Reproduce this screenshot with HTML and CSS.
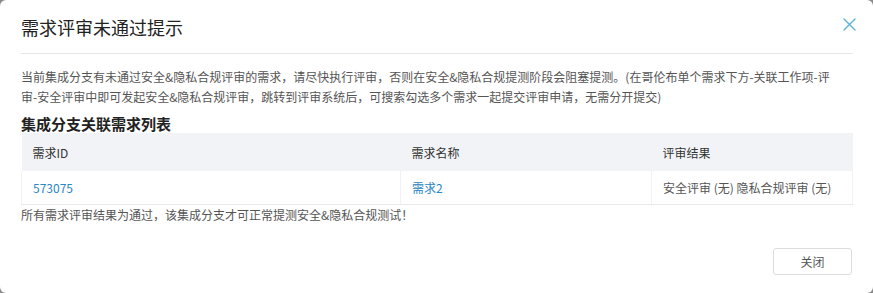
FILE: index.html
```html
<!DOCTYPE html>
<html lang="zh-CN">
<head>
<meta charset="utf-8">
<title>需求评审未通过提示</title>
<link rel="stylesheet" href="styles.css">
</head>
<body>
<div class="modal">
  <div class="modal-header">
    <div class="modal-title">需求评审未通过提示</div>
    <span class="close" aria-label="关闭">
      <svg width="13" height="13" viewBox="0 0 13 13"><path d="M1 1 L12 12 M12 1 L1 12" stroke="#5eb1dc" stroke-width="1.4" fill="none" stroke-linecap="round"/></svg>
    </span>
  </div>
  <div class="modal-body">
    <p class="desc">当前集成分支有未通过安全&amp;隐私合规评审的需求，请尽快执行评审，否则在安全&amp;隐私合规提测阶段会阻塞提测。(在哥伦布单个需求下方-关联工作项-评审-安全评审中即可发起安全&amp;隐私合规评审，跳转到评审系统后，可搜索勾选多个需求一起提交评审申请，无需分开提交)</p>
    <div class="section-title">集成分支关联需求列表</div>
    <table class="req-table">
      <colgroup>
        <col class="c1"><col class="c2"><col class="c3">
      </colgroup>
      <thead>
        <tr><th>需求ID</th><th>需求名称</th><th>评审结果</th></tr>
      </thead>
      <tbody>
        <tr><td><a class="link">573075</a></td><td><a class="link">需求2</a></td><td class="result">安全评审 (无) 隐私合规评审 (无)</td></tr>
      </tbody>
    </table>
    <p class="note">所有需求评审结果为通过，该集成分支才可正常提测安全&amp;隐私合规测试！</p>
    <div class="modal-footer">
      <button class="btn">关闭</button>
    </div>
  </div>
</div>
</body>
</html>
```
FILE: styles.css
```css
html, body {
  margin: 0;
  padding: 0;
}
body {
  background: #8a8a8a;
  font-family: "Microsoft YaHei", "Noto Sans CJK SC", "Liberation Sans", sans-serif;
  color: #333;
}
.modal {
  width: 873px;
  height: 293px;
  background: #fff;
  border-radius: 6px;
  overflow: hidden;
  box-sizing: border-box;
}
.modal-header {
  margin: 0 20px 0 21px;
  height: 53px;
  border-bottom: 1px solid #e6e6e6;
  display: flex;
  align-items: center;
  justify-content: space-between;
}
.modal-title {
  font-size: 18px;
  line-height: 24px;
  color: #222;
  margin-top: 1px;
}
.close {
  display: flex;
  margin-right: -3px;
  margin-top: -5px;
}
.modal-body {
  padding: 0 21px 0 21px;
}
.desc {
  margin: 13px 0 0;
  width: 815px;
  font-size: 12px;
  line-height: 20px;
  color: #555;
}
.section-title {
  margin-top: 8px;
  font-size: 15px;
  line-height: 18px;
  font-weight: bold;
  color: #222;
}
.req-table {
  width: 831px;
  border-collapse: collapse;
  table-layout: fixed;
  font-size: 12px;
}
.c1 { width: 379px; }
.c2 { width: 251px; }
.c3 { width: 201px; }
.req-table th {
  height: 38px;
  padding: 0 11px;
  text-align: left;
  font-weight: normal;
  color: #333;
  background: #f1f3f7;
}
.req-table td {
  height: 33px;
  padding: 0 11px;
  border-left: 1px solid #f2f2f2;
  border-right: 1px solid #f2f2f2;
  border-bottom: 1px solid #e9e9e9;
}
.link {
  color: #2a86c5;
  text-decoration: none;
}
.result {
  color: #555;
}
.note {
  margin: 1px 0 0;
  font-size: 12px;
  line-height: 18px;
  color: #555;
}
.modal-footer {
  margin-top: 24px;
  display: flex;
  justify-content: flex-end;
  padding-right: 0;
}
.btn {
  width: 79px;
  height: 27px;
  border: 1px solid #dcdcdc;
  border-radius: 3px;
  background: #fff;
  font-family: inherit;
  font-size: 12px;
  color: #555;
  padding: 0;
}
```
